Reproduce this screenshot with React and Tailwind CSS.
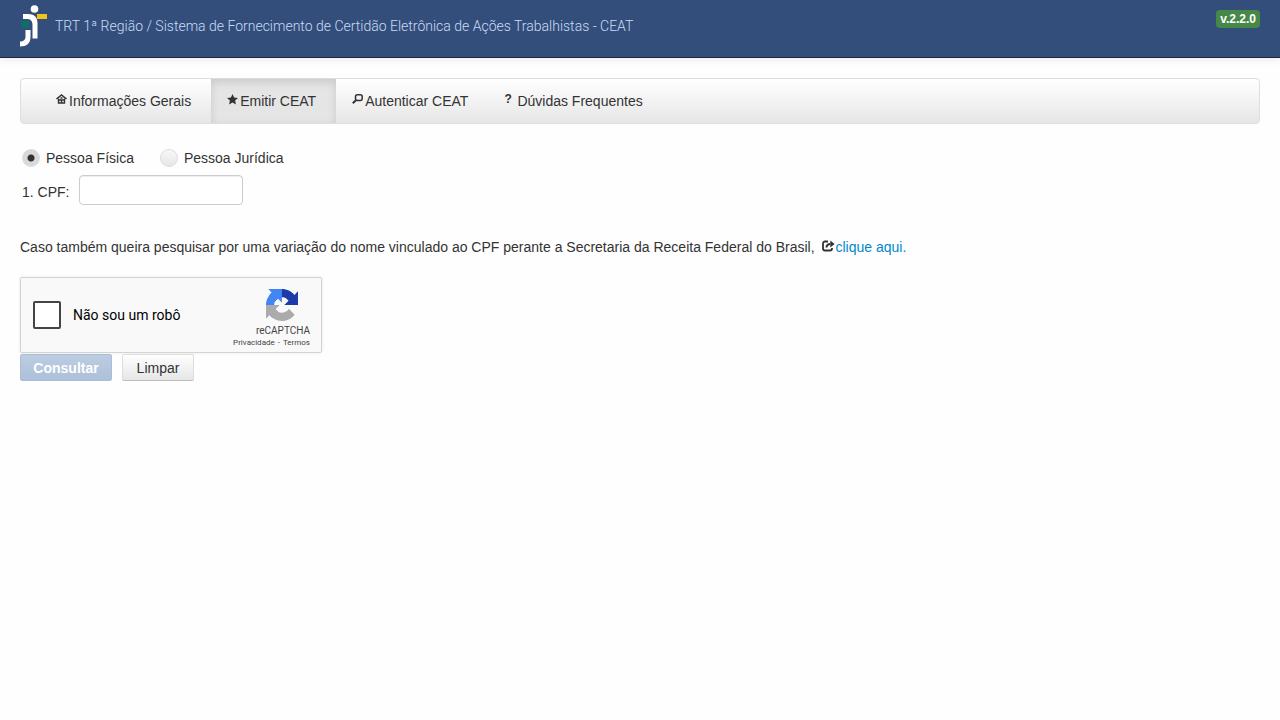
import React, { useState } from 'react';

const Logo = () => (
    <svg width="28" height="44" viewBox="0 0 28 44" aria-hidden="true">
        <circle cx="14.500" cy="5" r="3.800" fill="#fff" />
        <rect x="17" y="10" width="10" height="5" fill="#f5c21c" />
        <path d="M1 17h8v7H4.500c-2 0-3.500-1.500-3.500-3.500z" fill="#0c7068" />
        <path d="M3 10h5c6 0 9.500 3 9.500 9v15.500h-5V21c0-4-2-6-5.500-6H3z" fill="#fff" />
        <path d="M5.500 26h5v7c0 6.500-4 9.500-10.500 9.500v-5c3.500 0 5.500-1.500 5.500-5z" fill="#fff" />
    </svg>
);

const HomeIcon = () => (
    <svg width="11" height="10" viewBox="0 0 11 10" fill="none" stroke="#333" aria-hidden="true">
        <path d="M.5 5L5.500 1l5 4" strokeWidth="1.600" />
        <path d="M2.500 4.500V9h6V4.500M2.500 6h6M4.500 4h2" strokeWidth="1.400" />
        <path d="M5.500 6v3" strokeWidth="1.400" />
    </svg>
);

const StarIcon = () => (
    <svg width="11" height="11" viewBox="0 0 11 11" fill="#333" aria-hidden="true">
        <path d="M5.500 0l1.600 3.600 3.900.4-2.900 2.600.8 3.900-3.400-2-3.400 2 .8-3.900L0 4l3.900-.4z" />
    </svg>
);

const SearchIcon = () => (
    <svg width="11" height="10" viewBox="0 0 11 10" fill="none" stroke="#333" aria-hidden="true">
        <rect x="3.500" y=".8" width="6.700" height="5.800" rx="2" strokeWidth="1.500" />
        <path d="M4.500 5.800L.8 9.200" strokeWidth="2" />
    </svg>
);

const ShareIcon = () => (
    <svg width="13" height="12" viewBox="0 0 13 12" fill="none" stroke="#333" className="mb-1 ml-1 inline-block" aria-hidden="true">
        <path d="M6 1.500H3c-1.200 0-2 .8-2 2v5c0 1.200.8 2 2 2h5c1.200 0 2-.8 2-2V8" strokeWidth="1.800" />
        <path d="M4.500 7.500c0-2.500 1.500-3.500 4-3.500" strokeWidth="2" />
        <path d="M8.300.5v7L12.600 4z" fill="#333" stroke="none" />
    </svg>
);

const RecaptchaLogo = () => (
    <svg width="32" height="32" viewBox="0 0 64 64" aria-hidden="true">
        <path fill="#1c3aa9" d="M64 31.955l-.033-1.370V4.687l-7.160 7.160C50.948 4.674 42.033.093 32.050.093c-10.400 0-19.622 4.960-25.458 12.640l11.736 11.860a15.550 15.550 0 0 1 4.754-5.334c2.050-1.600 4.952-2.906 8.968-2.906.485 0 .860.057 1.135.163 4.976.393 9.288 3.140 11.828 7.124l-8.307 8.307L64 31.953" />
        <path fill="#4285f4" d="M31.862.094l-1.370.033H4.594l7.160 7.160C4.580 13.147 0 22.060 0 32.046c0 10.400 4.960 19.622 12.640 25.458L24.500 45.768a15.550 15.550 0 0 1-5.334-4.754c-1.600-2.050-2.906-4.952-2.906-8.968 0-.485.057-.860.163-1.135.393-4.976 3.140-9.288 7.124-11.828l8.307 8.307L31.860.095" />
        <path fill="#ababab" d="M.001 32.045l.033 1.370v25.898l7.160-7.160c5.860 7.173 14.774 11.754 24.760 11.754 10.400 0 19.622-4.960 25.458-12.640l-11.736-11.860a15.550 15.550 0 0 1-4.754 5.334c-2.050 1.600-4.952 2.906-8.968 2.906-.485 0-.860-.057-1.135-.163-4.976-.393-9.288-3.140-11.828-7.124l8.307-8.307c-10.522.040-22.400.066-27.295-.005" />
    </svg>
);

const NavItem = ({ icon, label, active }) => (
    <a
        href="#"
        className={
            active
                ? 'flex items-center bg-[#e5e5e5] pr-5 pl-4 shadow-[inset_0_3px_8px_rgba(0,0,0,0.125)]'
                : 'flex items-center pr-5 pl-4'
        }
    >
        <span className="mb-1 flex w-[13px] shrink-0">{icon}</span>
        {label}
    </a>
);

const PersonRadio = ({ label, checked, onChange }) => (
    <label className="flex items-center gap-[6px]">
        <input
            type="radio"
            name="pessoa"
            checked={checked}
            onChange={onChange}
            className="size-[18px] appearance-none rounded-full border border-[#ddd] bg-linear-to-b from-[#f8f8f8] to-[#e6e6e6] checked:bg-[radial-gradient(circle,#333_3px,#d9d9d9_4px)]"
        />
        {label}
    </label>
);

const Recaptcha = () => (
    <div className="flex h-19 w-[302px] justify-between rounded-xs border border-[#d3d3d3] bg-[#f9f9f9] pr-[11px] pl-3 font-['Roboto',sans-serif] text-black shadow-[0_0_3px_rgba(0,0,0,0.1)]">
        <label className="flex items-center gap-3 text-sm">
            <input type="checkbox" className="size-7 appearance-none rounded-xs border-2 border-[#444] bg-white" />
            Não sou um robô
        </label>
        <div className="flex flex-col items-end pt-[7px] text-[#444]">
            <div className="mr-3 h-9 pt-1">
                <RecaptchaLogo />
            </div>
            <div className="pt-1 text-[10px] leading-3">reCAPTCHA</div>
            <div className="flex gap-[3px] text-[8px] leading-3">
                <a href="#">Privacidade</a>-<a href="#">Termos</a>
            </div>
        </div>
    </div>
);

const App = () => {
    const [pessoa, setPessoa] = useState('fisica');

    return (
        <div className="min-h-screen bg-[#fefefe] font-['Liberation_Sans',Arial,sans-serif] text-sm text-[#333]">
            {/* Header */}
            <header className="flex h-[58px] items-start justify-between border-b border-[#1f2638] bg-[#344e7c] px-5 shadow-[0_1px_8px_rgba(0,0,0,0.1)]">
                <div className="flex items-center gap-[7px] pt-1">
                    <Logo />
                    <h1 className="font-['Roboto',sans-serif] text-sm font-light text-[#c8dcf5]">
                        TRT 1ª Região / Sistema de Fornecimento de Certidão Eletrônica de Ações Trabalhistas - CEAT
                    </h1>
                </div>
                <span className="mt-[10px] rounded-sm bg-[#468847] px-1 text-xs leading-[18px] font-bold text-white">v.2.2.0</span>
            </header>

            <main className="px-5 pt-5">
                {/* Menu */}
                <nav className="flex h-[46px] rounded-sm border border-[#dedede] bg-linear-to-b from-white to-[#e6e6e6] pl-[19px]">
                    <NavItem icon={<HomeIcon />} label="Informações Gerais" />
                    <NavItem icon={<StarIcon />} label="Emitir CEAT" active />
                    <NavItem icon={<SearchIcon />} label="Autenticar CEAT" />
                    <NavItem icon={<b className="text-xs leading-3">?</b>} label="Dúvidas Frequentes" />
                </nav>

                <form onSubmit={(e) => e.preventDefault()}>
                    <div className="mt-6 flex gap-[26px] px-0.5">
                        <PersonRadio label="Pessoa Física" checked={pessoa === 'fisica'} onChange={() => setPessoa('fisica')} />
                        <PersonRadio label="Pessoa Jurídica" checked={pessoa === 'juridica'} onChange={() => setPessoa('juridica')} />
                    </div>
                    <div className="mt-[7px] flex items-center gap-[10px] px-0.5">
                        <label htmlFor="cpf" className="pt-1">1. CPF:</label>
                        <input
                            id="cpf"
                            type="text"
                            className="h-[30px] w-[164px] rounded-sm border border-[#ccc] bg-white px-2 shadow-[inset_0_1px_1px_rgba(0,0,0,0.075)]"
                        />
                    </div>

                    <p className="mt-8 mb-5">
                        Caso também queira pesquisar por uma variação do nome vinculado ao CPF perante a Secretaria da Receita Federal do Brasil,{' '}
                        <ShareIcon />
                        <a href="#" className="text-[#0088cc]">clique aqui.</a>
                    </p>

                    <Recaptcha />

                    {/* Actions */}
                    <div className="mt-px flex gap-[10px]">
                        <button
                            type="submit"
                            className="h-[27px] w-23 rounded-xs border border-[#a9bdd6] bg-linear-to-b from-[#bccde1] to-[#adc0da] font-bold text-white"
                        >
                            Consultar
                        </button>
                        <button
                            type="reset"
                            className="h-[27px] w-18 rounded-xs border border-[#ddd] border-b-[#bbb] bg-linear-to-b from-white to-[#e6e6e6]"
                        >
                            Limpar
                        </button>
                    </div>
                </form>
            </main>
        </div>
    );
};

export default App;
